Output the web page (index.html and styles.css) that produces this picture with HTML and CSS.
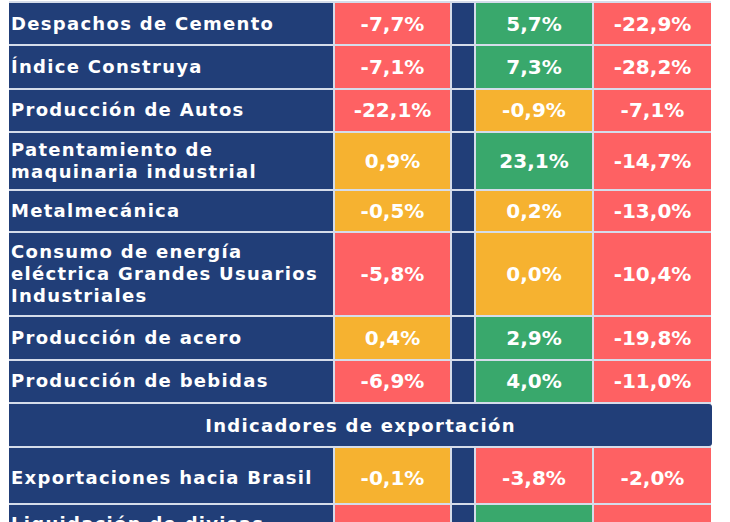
FILE: index.html
```html
<!DOCTYPE html>
<html lang="es">
<head>
<meta charset="utf-8">
<title>Indicadores</title>
<link rel="stylesheet" href="styles.css">
</head>
<body>
<div class="table">
  <div class="row row--r1">
    <div class="cell label">Despachos de Cemento</div>
    <div class="cell red">-7,7%</div><div class="spacer"></div>
    <div class="cell green">5,7%</div><div class="cell red">-22,9%</div>
  </div>
  <div class="row">
    <div class="cell label">Índice Construya</div>
    <div class="cell red">-7,1%</div><div class="spacer"></div>
    <div class="cell green">7,3%</div><div class="cell red">-28,2%</div>
  </div>
  <div class="row">
    <div class="cell label">Producción de Autos</div>
    <div class="cell red">-22,1%</div><div class="spacer"></div>
    <div class="cell orange">-0,9%</div><div class="cell red">-7,1%</div>
  </div>
  <div class="row row--two">
    <div class="cell label">Patentamiento de<br>maquinaria industrial</div>
    <div class="cell orange">0,9%</div><div class="spacer"></div>
    <div class="cell green">23,1%</div><div class="cell red">-14,7%</div>
  </div>
  <div class="row row--short">
    <div class="cell label">Metalmecánica</div>
    <div class="cell orange">-0,5%</div><div class="spacer"></div>
    <div class="cell orange">0,2%</div><div class="cell red">-13,0%</div>
  </div>
  <div class="row row--three">
    <div class="cell label">Consumo de energía<br>eléctrica Grandes Usuarios<br>Industriales</div>
    <div class="cell red">-5,8%</div><div class="spacer"></div>
    <div class="cell orange">0,0%</div><div class="cell red">-10,4%</div>
  </div>
  <div class="row">
    <div class="cell label">Producción de acero</div>
    <div class="cell orange">0,4%</div><div class="spacer"></div>
    <div class="cell green">2,9%</div><div class="cell red">-19,8%</div>
  </div>
  <div class="row">
    <div class="cell label">Producción de bebidas</div>
    <div class="cell red">-6,9%</div><div class="spacer"></div>
    <div class="cell green">4,0%</div><div class="cell red">-11,0%</div>
  </div>
  <div class="section">Indicadores de exportación</div>
  <div class="row row--tall">
    <div class="cell label">Exportaciones hacia Brasil</div>
    <div class="cell orange">-0,1%</div><div class="spacer"></div>
    <div class="cell red">-3,8%</div><div class="cell red">-2,0%</div>
  </div>
  <div class="row row--last">
    <div class="cell label">Liquidación de divisas</div>
    <div class="cell red"></div><div class="spacer"></div>
    <div class="cell green"></div><div class="cell red"></div>
  </div>
</div>
</body>
</html>
```

FILE: styles.css
```css
html, body {
  margin: 0;
  height: 522px;
  overflow: hidden;
  background: #ffffff;
}

.table {
  margin: 1px 0 0 9px;
  width: 702px;
  display: flex;
  flex-direction: column;
  gap: 2px;
  padding-top: 2px;
  background: #d5dcea;
}

.row {
  display: grid;
  grid-template-columns: 324px 115px 22px 116px 117px;
  column-gap: 2px;
  height: 41.5px;
}

.row--r1 { height: 41px; }
.row--two { height: 56px; }
.row--short { height: 40px; }
.row--three { height: 82px; }
.row--tall { height: 55px; }
.row--tall .cell { padding-top: 5px; }
.row--last { height: 60px; }
.row--last .label { align-items: flex-start; padding-top: 8px; }

.cell {
  display: flex;
  align-items: center;
  justify-content: center;
  color: #ffffff;
  font-family: "DejaVu Sans", sans-serif;
  font-weight: 700;
  font-size: 20px;
}

.label {
  background: #213e78;
  justify-content: flex-start;
  padding-left: 2px;
  font-size: 18px;
  line-height: 21.7px;
  letter-spacing: 1.3px;
}

.spacer { background: #213e78; }
.red { background: #fe6163; }
.green { background: #39a86c; }
.orange { background: #f6b230; }

.section {
  height: 42px;
  margin-right: -1px;
  border-radius: 0 3px 3px 0;
  background: #213e78;
  color: #ffffff;
  display: flex;
  align-items: center;
  justify-content: center;
  font-family: "DejaVu Sans", sans-serif;
  font-weight: 700;
  font-size: 18px;
  letter-spacing: 1.3px;
}
```
